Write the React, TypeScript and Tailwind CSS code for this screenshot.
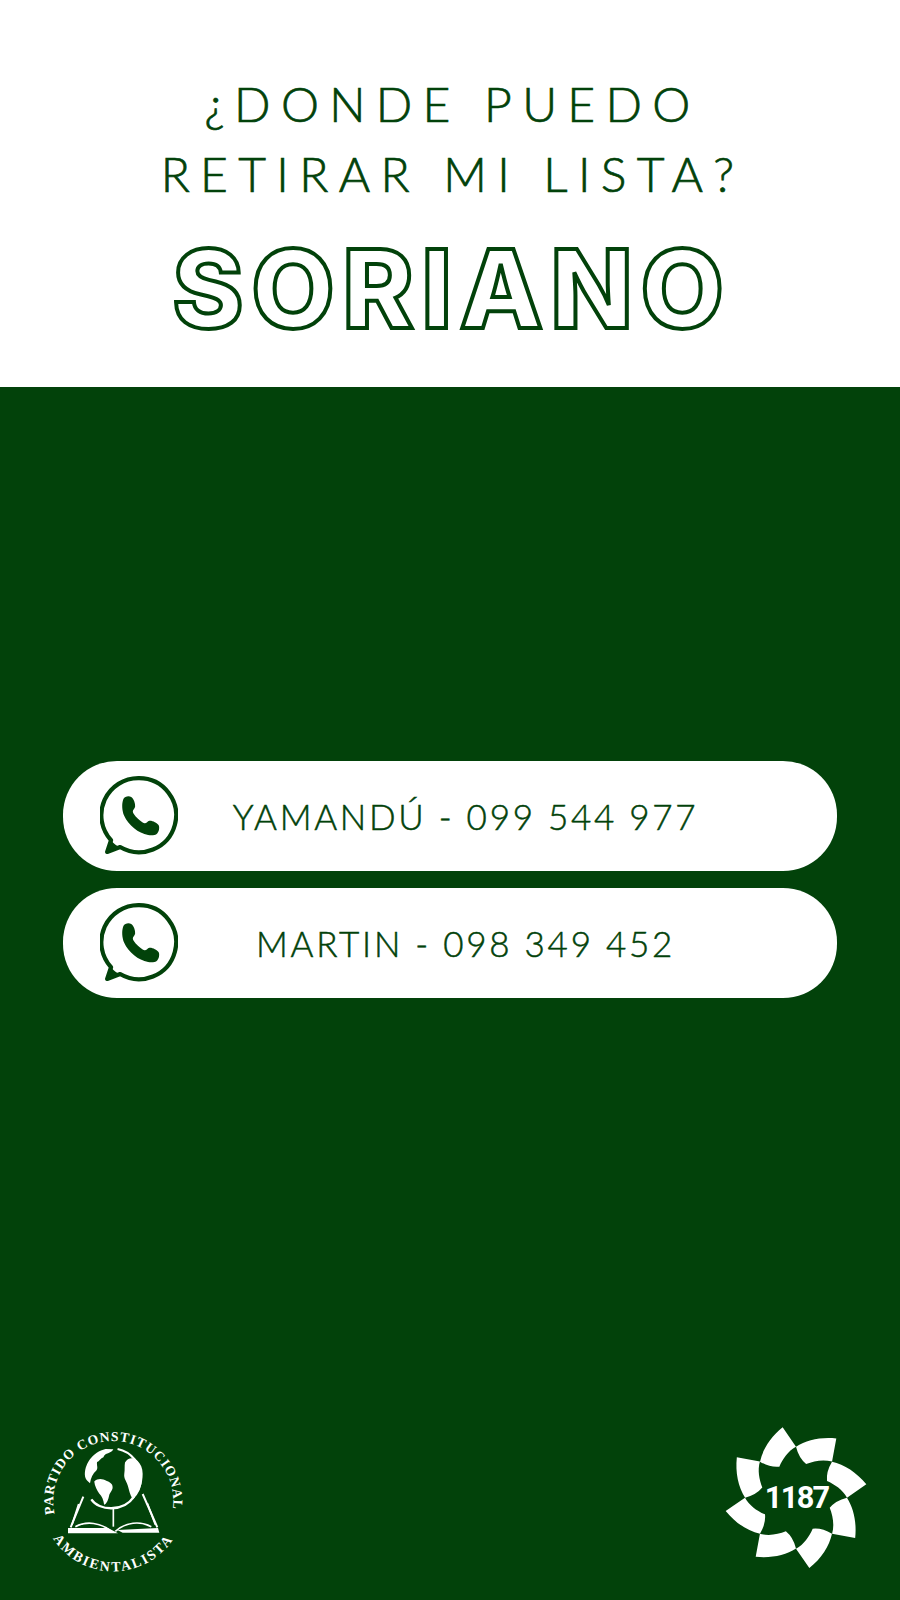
import React from 'react';

const GREEN = '#02420a';

const contacts = [
  { id: 1, label: 'YAMANDÚ - 099 544 977' },
  { id: 2, label: 'MARTIN - 098 349 452' },
];

const WhatsappIcon: React.FC = () => (
  <svg viewBox="0 0 240 245" className="ml-[2px] h-[80px] w-[78px] shrink-0" fill="none">
    <path
      d="M120 6a114 114 0 1 1-58 212l-40 15 12-36A114 114 0 0 1 120 6Z"
      stroke={GREEN}
      strokeWidth="13"
      strokeLinejoin="round"
      fill="white"
    />
    <path d="M34 197 20 234l44-14c-13-6-23-13-30-23Z" fill={GREEN} />
    <path
      d="M72 70c4-8 17-11 24-6 8 5 13 20 12 30-1 6-7 9-7 15 0 10 26 34 36 36 6 1 9-7 15-8 10-1 23 7 28 13 4 6 2 20-4 26-6 6-18 7-28 5-30-6-60-29-74-60-6-15-8-36-2-51Z"
      fill={GREEN}
    />
  </svg>
);

const ContactPill: React.FC<{ label: string }> = ({ label }) => (
  <div className="flex h-[110px] items-center rounded-[54px] bg-white pl-[35px] pr-[84px]">
    <WhatsappIcon />
    <span className="flex-1 whitespace-nowrap text-center font-['Lato',sans-serif] text-[35px] font-light leading-none tracking-[0.078em] text-[#02420a] [-webkit-text-stroke:0.5px_#02420a]">
      {label}
    </span>
  </div>
);

const PartyLogo: React.FC = () => (
  <svg viewBox="0 0 510 480" className="mb-[10px] h-[160px] w-[170px] overflow-visible">
    <defs>
      <path id="arcTop" d="M74 312A180 180 0 1 1 424 318" />
      <path id="arcBottom" d="M40 315A215 215 0 0 0 460 315" />
    </defs>
    <text fill="white" fontFamily="'Liberation Serif',serif" fontWeight="700" fontSize="41" letterSpacing="2.6">
      <textPath href="#arcTop">PARTIDO CONSTITUCIONAL</textPath>
    </text>
    <text fill="white" fontFamily="'Liberation Serif',serif" fontWeight="700" fontSize="42" letterSpacing="6">
      <textPath href="#arcBottom" startOffset="50%" textAnchor="middle">AMBIENTALISTA</textPath>
    </text>
    {/* globe */}
    <g transform="translate(250 205) scale(1.06) translate(-250 -205)">
      <path d="M262 122a82 82 0 0 1 66 84c0 22-10 42-24 56" fill="none" stroke="white" strokeWidth="6" />
      <path d="M170 200c-4-34 22-70 58-78l22 1c-6 12-24 10-28 22-8 2-12 12-18 14-2 10 4 16-2 24-10 8-16 22-18 36-8-6-13-12-14-19Z" fill="white" />
      <path d="M196 214c10-10 24-8 34-2 10 4 18 8 18 18 0 10-8 14-10 24-2 10-6 22-14 26-2-14-6-24-14-32-6-8-13-22-14-34Z" fill="white" />
      <path d="M283 160c8-14 24-16 36-4 8 8 14 20 14 36 0 28-8 50-28 70-8-8-10-24-14-36-4-14-12-20-10-34 2-12 0-22 2-32Z" fill="white" />
    </g>
    <path d="M184 268c22 34 96 40 128-8" fill="none" stroke="white" strokeWidth="7" />
    <path d="M250 294v56" stroke="white" strokeWidth="5" fill="none" />
    {/* book */}
    <path d="M160 260 122 352M338 252l44 100" fill="none" stroke="white" strokeWidth="6" />
    <path d="M146 282l-20 62M352 280l24 64M136 350c34-18 76-12 108 14M364 350c-34-18-76-14-108 14" fill="none" stroke="white" strokeWidth="5" />
    <path d="M114 354h120l30 16h-150ZM262 360l122-6 4 14H278Z" fill="white" />
  </svg>
);

const NumberBadge: React.FC = () => (
  <svg viewBox="0 0 510 510" className="h-[170px] w-[170px]">
    <g transform="translate(258 263)" fill="white">
      {[0, 45, 90, 135, 180, 225, 270, 315].map((angle) => (
        <path
          key={angle}
          transform={`rotate(${angle})`}
          d="M-108-108C-100-145-76-182-40-211L0-153C-24-140-40-116-50-93Q-78-90-108-108Z"
        />
      ))}
    </g>
    <text
      x="260"
      y="293"
      textAnchor="middle"
      fill="white"
      fontFamily="'Roboto',sans-serif"
      fontWeight="700"
      fontSize="92"
      letterSpacing="-5"
    >
      1187
    </text>
  </svg>
);

export default function App() {
  return (
    <div className="flex h-[1600px] w-[900px] flex-col overflow-hidden bg-[#02420a]">
      {/* Header */}
      <header className="flex h-[387px] flex-col items-center bg-white pt-[69px] text-[#02420a]">
        <p className="whitespace-nowrap pl-[5px] font-['Lato',sans-serif] text-[48px] font-light leading-[70px] tracking-[0.215em] [-webkit-text-stroke:0.7px_#02420a]">¿DONDE PUEDO</p>
        <p className="whitespace-nowrap pl-[5px] font-['Lato',sans-serif] text-[48px] font-light leading-[70px] tracking-[0.215em] [-webkit-text-stroke:0.7px_#02420a]">RETIRAR MI LISTA?</p>
        <h1 className="mt-[22px] whitespace-nowrap pl-[4px] font-['Inter',sans-serif] text-[108px] font-extrabold leading-[116px] tracking-[0.07em] text-white [-webkit-text-stroke:4px_#02420a]">
          SORIANO
        </h1>
      </header>

      {/* Contacts */}
      <section className="flex flex-1 flex-col">
        <div className="mx-[63px] mt-[374px] flex flex-col gap-[17px]">
          {contacts.map((contact) => (
            <ContactPill key={contact.id} label={contact.label} />
          ))}
        </div>

        {/* Logos */}
        <div className="mt-auto flex items-end justify-between pb-[20px] pl-[30px] pr-[20px]">
          <PartyLogo />
          <NumberBadge />
        </div>
      </section>
    </div>
  );
}
